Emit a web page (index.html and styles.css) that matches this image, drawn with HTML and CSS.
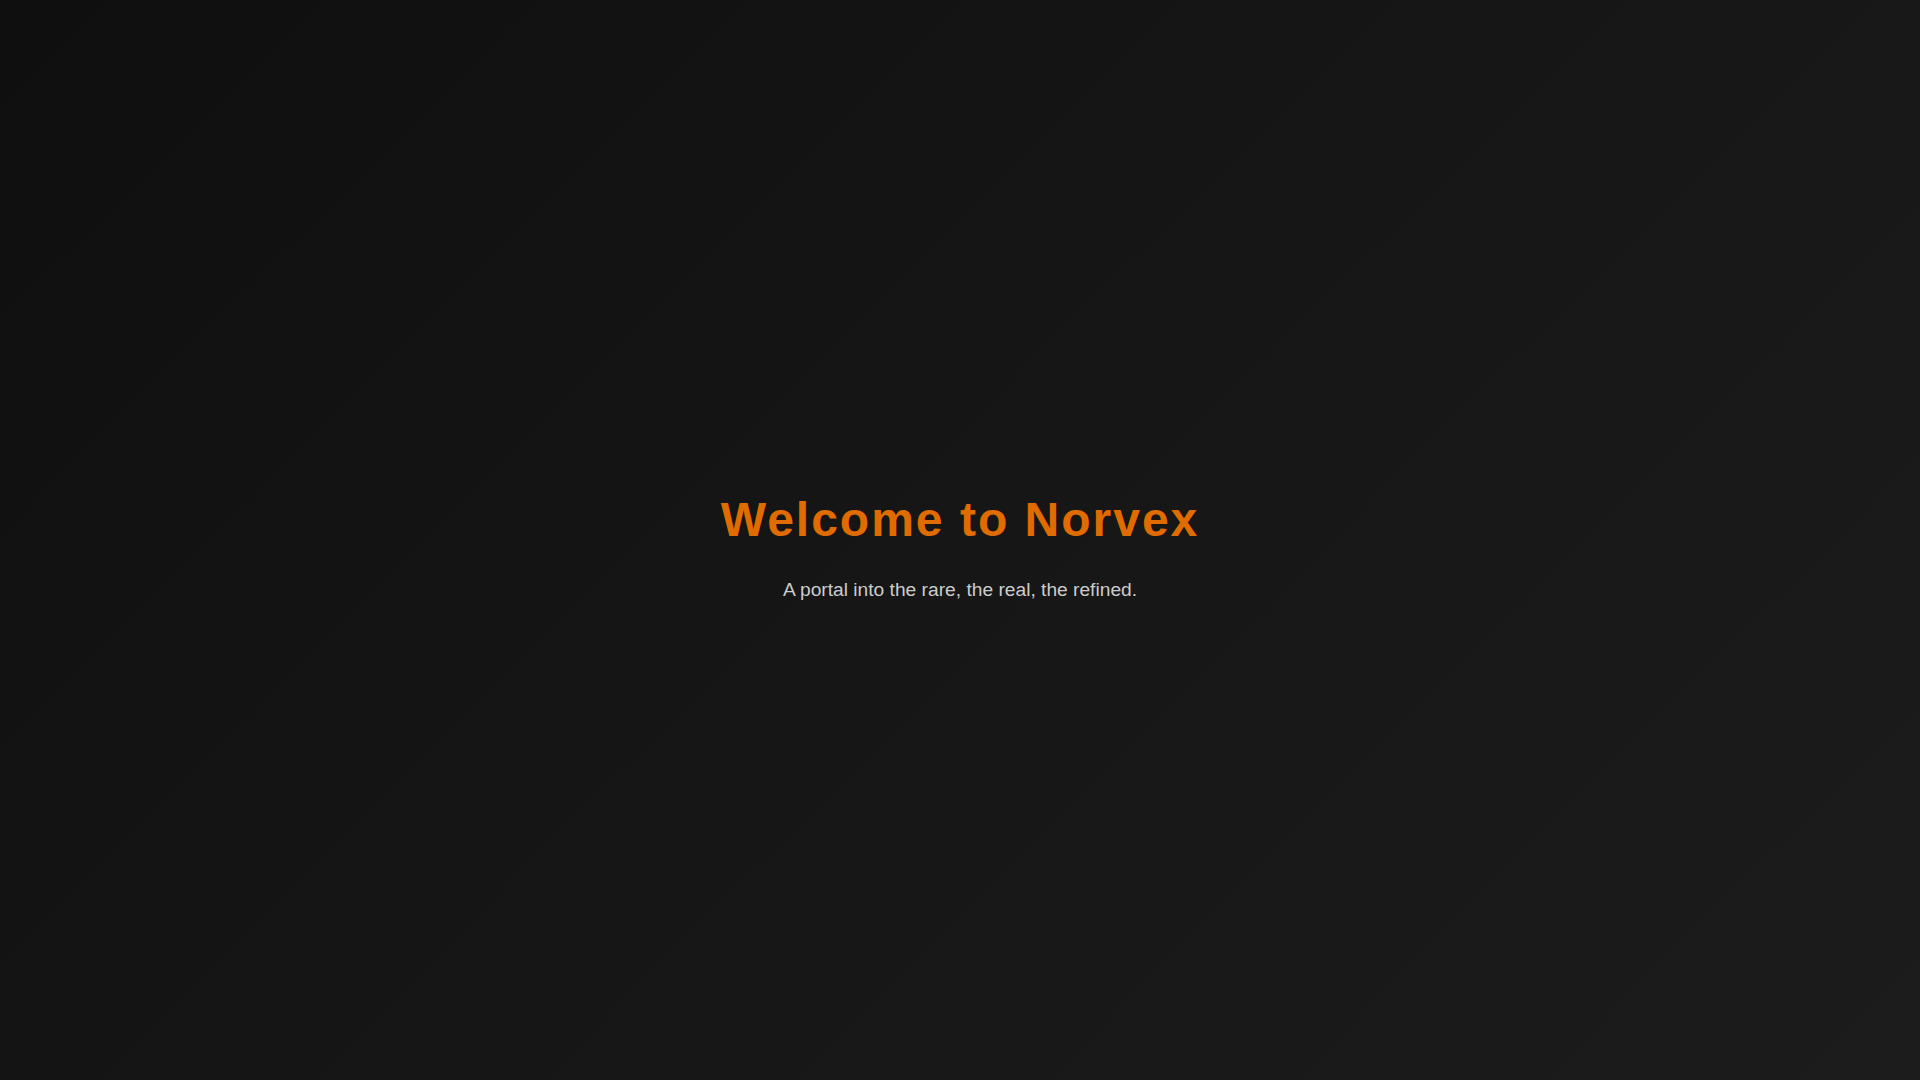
FILE: index.html
```html
<!DOCTYPE html>
<html lang="en">
<head>
<meta charset="utf-8">
<title>Norvex</title>
<link rel="stylesheet" href="styles.css">
</head>
<body>
<main class="hero">
  <div class="hero-content">
    <h1 class="hero-title">Welcome to Norvex</h1>
    <p class="hero-subtitle">A portal into the rare, the real, the refined.</p>
  </div>
</main>
</body>
</html>
```
FILE: styles.css
```css
html, body {
  margin: 0;
  padding: 0;
  height: 100%;
}
body {
  background: linear-gradient(135deg, #0f0f0f 0%, #161616 50%, #1c1c1c 100%);
  font-family: "Liberation Sans", Arial, sans-serif;
  color: #cccccc;
}
.hero {
  min-height: 100vh;
  display: flex;
  align-items: center;
  justify-content: center;
  box-sizing: border-box;
  padding-top: 13px;
}
.hero-content {
  display: flex;
  flex-direction: column;
  align-items: center;
  gap: 32px;
  text-align: center;
}
.hero-title {
  margin: 0;
  font-size: 48px;
  font-weight: 700;
  letter-spacing: 2px;
  color: #e06c00;
}
.hero-subtitle {
  margin: 0;
  font-size: 19.2px;
  color: #cccccc;
}
```
